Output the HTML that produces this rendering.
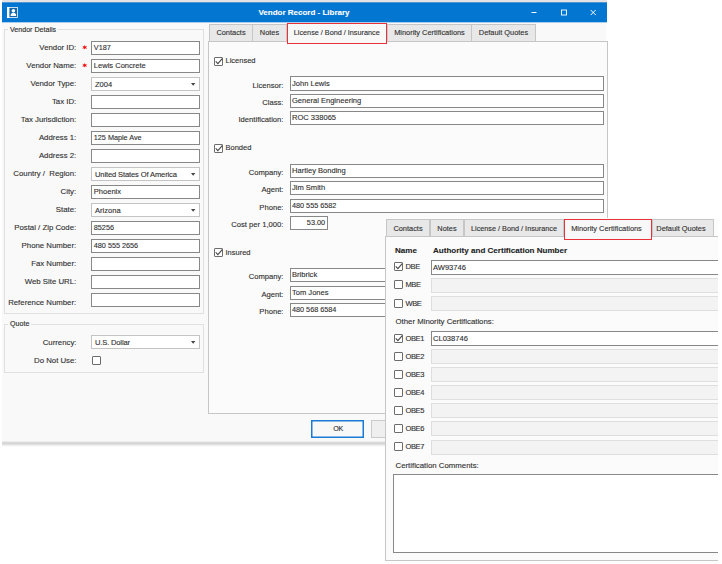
<!DOCTYPE html>
<html><head><meta charset="utf-8"><title>Vendor Record - Library</title>
<style>
html,body{margin:0;padding:0;background:#fff}
body{width:722px;height:564px;position:relative;overflow:hidden;font-family:"Liberation Sans",sans-serif;font-size:7.5px;color:#303030;-webkit-text-stroke:0.12px #303030}
div,svg{position:absolute;box-sizing:border-box}
.abs{position:absolute}
.win{background:#f9f9f9}
.t{white-space:nowrap;line-height:10px;height:10px}
.r{text-align:right}
.b{font-weight:bold;color:#222;font-size:8.05px}
.tt{color:#fff;font-weight:bold;font-size:8px;-webkit-text-stroke:0.1px #fff}
.leg{background:#f9f9f9;padding:0 2px;font-size:7.1px;-webkit-text-stroke:0.14px #303030}
.lb{font-size:7.8px}
.cl{font-size:7.5px}
.rl{font-size:7.65px}
.fld.num{font-size:7.25px}
.grp{border:1px solid #e0e0e0}
.fld{font-size:7.55px;background:#fff;border:1px solid #888;line-height:11px;padding-left:1px;white-space:nowrap;overflow:hidden}
.fld.hi{line-height:11px}
.fld.ov{line-height:12px}
.fld.lp{padding-left:1.8px}
.fld.cmb{border-color:#c4c4c4;line-height:12px}
.fld.dis{background:#f3f3f3;border-color:#dedede}
.fld div,.fld span,.tab span{position:static;display:block}
.arw{right:3.4px;top:5px}
.cb{width:9px;height:9px;background:#fff;border:1px solid #6c6c6c;border-radius:1px}
.cb svg{left:-1px;top:-1px}
.page{background:#fbfbfb;border:1px solid #c6c6c6}
.tab{font-size:7.4px;background:#e8e8e8;border:1px solid #c6c6c6;border-bottom:none;text-align:center;line-height:17px;white-space:nowrap}
.tab.sel{background:#f8f8f8;border:1px solid #ea3038;line-height:19.5px}
.btn{background:#efefef;border:1px solid #cacaca;text-align:center;line-height:16px;font-size:7.2px;letter-spacing:-.4px;padding-left:1px}
.btn.ok{background:#f8f8f8;border:1px solid #1a7ad4;box-shadow:inset 0 0 0 .5px #1a7ad4}
</style></head>
<body>
<div class="abs" style="left:2px;top:0;width:605px;height:2px;background:#e4e2e2"></div>
<div class="abs win" style="left:2px;top:2px;width:604px;height:440px"></div><div class="abs" style="left:2px;top:441px;width:605px;height:6px;background:linear-gradient(#f5f5f5 0%,#dcdcdc 22%,#d3d3d3 40%,#e0e0e0 58%,#f2f2f2 78%,#fff 100%)"></div>
<div class="abs" style="left:2px;top:2px;width:605px;height:21px;background:linear-gradient(to bottom,#4f98d8 0,#4f98d8 1px,#0071cc 1px,#0276d0 2.5px,#0276d0 20px,#a9cdec 20px,#a9cdec 21px)"></div>
<svg class="abs" style="left:7px;top:7px" width="11" height="11" viewBox="0 0 11 11"><rect x="0.5" y="0.5" width="10" height="10" fill="#1467ac" stroke="#eaf2fa" stroke-width="0.85"/><rect x="0" y="0" width="2.4" height="11" fill="#fff"/><circle cx="6.4" cy="3.7" r="1.8" fill="#fff"/><path d="M3.6 9 C3.6 6.4 4.8 5.8 6.4 5.8 C8 5.8 9.2 6.4 9.2 9 Z" fill="#fff"/></svg>
<div class="t tt" style="left:204px;top:8px;width:200px;text-align:center">Vendor Record - Library</div>
<svg class="abs" style="left:525px;top:6px" width="80" height="13" viewBox="0 0 80 13"><path d="M6.5 6.5 H11.5" stroke="#fff" stroke-width="1"/><rect x="36.5" y="4" width="5" height="5" fill="none" stroke="#fff" stroke-width="0.9"/><path d="M65.7 4 L70.7 9 M70.7 4 L65.7 9" stroke="#fff" stroke-width="0.95"/></svg>
<div class="grp" style="left:4px;top:29px;width:200px;height:285px"></div>
<div class="t leg" style="left:8px;top:24.5px;">Vendor Details</div>
<div class="grp" style="left:4px;top:324px;width:200px;height:49px"></div>
<div class="t leg" style="left:8px;top:319px;">Quote</div>
<div class="t r lb" style="left:-73.8px;width:150px;top:42.5px;">Vendor ID:</div>
<div class="fld lp num" style="left:91px;top:41px;width:109px;height:14px">V187</div>
<svg class="abs" style="left:81.5px;top:45.4px" viewBox="0 0 10 10" width="5.4" height="4.6" preserveAspectRatio="none"><path d="M5 0 L6.2 3 L9.5 1.8 L7.3 5 L9.5 8.2 L6.2 7 L5 10 L3.8 7 L0.5 8.2 L2.7 5 L0.5 1.8 L3.8 3 Z" fill="#f01010"/></svg>
<div class="t r lb" style="left:-73.8px;width:150px;top:60.5px;">Vendor Name:</div>
<div class="fld lp" style="left:91px;top:59px;width:109px;height:14px">Lewis Concrete</div>
<svg class="abs" style="left:81.5px;top:63.4px" viewBox="0 0 10 10" width="5.4" height="4.6" preserveAspectRatio="none"><path d="M5 0 L6.2 3 L9.5 1.8 L7.3 5 L9.5 8.2 L6.2 7 L5 10 L3.8 7 L0.5 8.2 L2.7 5 L0.5 1.8 L3.8 3 Z" fill="#f01010"/></svg>
<div class="t r lb" style="left:-73.8px;width:150px;top:78.5px;">Vendor Type:</div>
<div class="fld cmb" style="left:91px;top:77px;width:109px;height:14px"><span style="padding:.8px 0 0 2px">Z004</span><svg class="arw" viewBox="0 0 5 3" width="4.4" height="2.8"><path d="M0 0 H5 L2.5 3 Z" fill="#444"/></svg></div>
<div class="t r lb" style="left:-73.8px;width:150px;top:96.5px;">Tax ID:</div>
<div class="fld lp" style="left:91px;top:95px;width:109px;height:14px"></div>
<div class="t r lb" style="left:-73.8px;width:150px;top:114.5px;">Tax Jurisdiction:</div>
<div class="fld lp" style="left:91px;top:113px;width:109px;height:14px"></div>
<div class="t r lb" style="left:-73.8px;width:150px;top:132.5px;">Address 1:</div>
<div class="fld lp num" style="left:91px;top:131px;width:109px;height:14px">125 Maple Ave</div>
<div class="t r lb" style="left:-73.8px;width:150px;top:150.5px;">Address 2:</div>
<div class="fld lp" style="left:91px;top:149px;width:109px;height:14px"></div>
<div class="t r lb" style="left:-73.8px;width:150px;top:168.5px;">Country /&nbsp; Region:</div>
<div class="fld cmb" style="left:91px;top:167px;width:109px;height:14px"><span style="padding:.8px 0 0 2px"><span style="letter-spacing:-.12px">United States Of America</span></span><svg class="arw" viewBox="0 0 5 3" width="4.4" height="2.8"><path d="M0 0 H5 L2.5 3 Z" fill="#444"/></svg></div>
<div class="t r lb" style="left:-73.8px;width:150px;top:186.5px;">City:</div>
<div class="fld lp" style="left:91px;top:185px;width:109px;height:14px">Phoenix</div>
<div class="t r lb" style="left:-73.8px;width:150px;top:204.5px;">State:</div>
<div class="fld cmb" style="left:91px;top:203px;width:109px;height:14px"><span style="padding:.8px 0 0 2px">Arizona</span><svg class="arw" viewBox="0 0 5 3" width="4.4" height="2.8"><path d="M0 0 H5 L2.5 3 Z" fill="#444"/></svg></div>
<div class="t r lb" style="left:-73.8px;width:150px;top:222.5px;">Postal / Zip Code:</div>
<div class="fld lp num" style="left:91px;top:221px;width:109px;height:14px">85256</div>
<div class="t r lb" style="left:-73.8px;width:150px;top:240.5px;">Phone Number:</div>
<div class="fld lp num" style="left:91px;top:239px;width:109px;height:14px">480 555 2656</div>
<div class="t r lb" style="left:-73.8px;width:150px;top:258.5px;">Fax Number:</div>
<div class="fld lp" style="left:91px;top:257px;width:109px;height:14px"></div>
<div class="t r lb" style="left:-73.8px;width:150px;top:276.5px;">Web Site URL:</div>
<div class="fld lp" style="left:91px;top:275px;width:109px;height:14px"></div>
<div class="t r lb" style="left:-73.8px;width:150px;top:297.5px;">Reference Number:</div>
<div class="fld lp" style="left:91px;top:293px;width:109px;height:14px"></div>
<div class="t r lb" style="left:-73.5px;width:150px;top:337.5px;">Currency:</div>
<div class="fld cmb" style="left:91px;top:335px;width:109px;height:14px"><span style="padding:.8px 0 0 2px;letter-spacing:-.15px">U.S. Dollar</span><svg class="arw" viewBox="0 0 5 3" width="4.4" height="2.8"><path d="M0 0 H5 L2.5 3 Z" fill="#444"/></svg></div>
<div class="t r lb" style="left:-73.5px;width:150px;top:356px;">Do Not Use:</div>
<div class="cb" style="left:91.5px;top:356px"></div>
<div class="page" style="left:208px;top:41px;width:400px;height:373px"></div>
<div class="tab" style="left:209px;top:24px;width:44px;height:17px"><span style="line-height:16px">Contacts</span></div>
<div class="tab" style="left:252px;top:24px;width:35px;height:17px"><span style="line-height:16px">Notes</span></div>
<div class="tab" style="left:387px;top:24px;width:85px;height:17px"><span style="line-height:16px">Minority Certifications</span></div>
<div class="tab" style="left:471px;top:24px;width:65px;height:17px"><span style="line-height:16px">Default Quotes</span></div>
<div class="tab sel" style="left:286.5px;top:23px;width:100.5px;height:20.5px"><span style="line-height:18.5px"><span style="font-size:7.25px">License / Bond / Insurance</span></span></div>
<div class="cb" style="left:214px;top:57px"><svg viewBox="0 0 9 9" width="9" height="9"><path d="M1.7 4.3 L3.9 6.6 L8.2 1.6" fill="none" stroke="#454545" stroke-width="1.05"/></svg></div>
<div class="t cl" style="left:225.5px;top:55.5px;">Licensed</div>
<div class="t rl r lb" style="left:133.5px;width:150px;top:80.5px;">Licensor:</div>
<div class="fld hi" style="left:290px;top:76px;width:314px;height:15px"><div style="padding-top:1px">John Lewis</div></div>
<div class="t rl r lb" style="left:133.5px;width:150px;top:97.5px;">Class:</div>
<div class="fld hi" style="left:290px;top:94px;width:314px;height:14px">General Engineering</div>
<div class="t rl r lb" style="left:133.5px;width:150px;top:114.5px;">Identification:</div>
<div class="fld hi" style="left:290px;top:111px;width:314px;height:14px">ROC 338065</div>
<div class="cb" style="left:214px;top:144px"><svg viewBox="0 0 9 9" width="9" height="9"><path d="M1.7 4.3 L3.9 6.6 L8.2 1.6" fill="none" stroke="#454545" stroke-width="1.05"/></svg></div>
<div class="t cl" style="left:225.5px;top:143px;">Bonded</div>
<div class="t rl r lb" style="left:133.5px;width:150px;top:167.5px;">Company:</div>
<div class="fld hi" style="left:290px;top:164px;width:314px;height:14px">Hartley Bonding</div>
<div class="t rl r lb" style="left:133.5px;width:150px;top:184.5px;">Agent:</div>
<div class="fld hi" style="left:290px;top:181px;width:314px;height:14px">Jim Smith</div>
<div class="t rl r lb" style="left:133.5px;width:150px;top:202.5px;">Phone:</div>
<div class="fld hi num" style="left:290px;top:199px;width:314px;height:14px">480 555 6582</div>
<div class="t rl r lb" style="left:133.5px;width:150px;top:219.5px;">Cost per 1,000:</div>
<div class="fld num" style="left:290px;top:216px;width:38px;height:14px"><div style="text-align:right;padding-right:2px">53.00</div></div>
<div class="cb" style="left:214px;top:248px"><svg viewBox="0 0 9 9" width="9" height="9"><path d="M1.7 4.3 L3.9 6.6 L8.2 1.6" fill="none" stroke="#454545" stroke-width="1.05"/></svg></div>
<div class="t cl" style="left:225.5px;top:248px;">Insured</div>
<div class="t rl r lb" style="left:133.5px;width:150px;top:271.5px;">Company:</div>
<div class="fld hi" style="left:290px;top:268px;width:314px;height:14px">Bribrick</div>
<div class="t rl r lb" style="left:133.5px;width:150px;top:289.5px;">Agent:</div>
<div class="fld hi" style="left:290px;top:286px;width:314px;height:14px">Tom Jones</div>
<div class="t rl r lb" style="left:133.5px;width:150px;top:306.5px;">Phone:</div>
<div class="fld hi num" style="left:290px;top:303px;width:314px;height:14px">480 568 6584</div>
<div class="btn ok" style="left:311px;top:420px;width:53px;height:18px">OK</div>
<div class="btn" style="left:371px;top:420px;width:53px;height:18px"></div>
<div class="abs" style="left:385px;top:218px;width:333px;height:346px;background:#fcfcfc"></div>
<div class="page" style="left:385px;top:236px;width:340px;height:325px"></div>
<div class="tab" style="left:386px;top:219px;width:44px;height:17px"><span style="line-height:17px">Contacts</span></div>
<div class="tab" style="left:430px;top:219px;width:34px;height:17px"><span style="line-height:17px">Notes</span></div>
<div class="tab" style="left:464px;top:219px;width:100px;height:17px"><span style="line-height:17px"><span style="font-size:7.28px">License / Bond / Insurance</span></span></div>
<div class="tab" style="left:652px;top:219px;width:62px;height:17px"><span style="line-height:17px"><span style="padding-right:4px">Default Quotes</span></span></div>
<div class="tab sel" style="left:564px;top:219px;width:88px;height:20.5px"><span style="line-height:17.5px"><span style="padding-right:3px">Minority Certifications</span></span></div>
<div class="abs" style="left:718px;top:210px;width:4px;height:354px;background:#fff"></div>
<div class="t b" style="left:395px;top:245.5px;">Name</div>
<div class="t b" style="left:433px;top:245.5px;">Authority and Certification Number</div>
<div class="cb" style="left:393.5px;top:262px"><svg viewBox="0 0 9 9" width="9" height="9"><path d="M1.7 4.3 L3.9 6.6 L8.2 1.6" fill="none" stroke="#454545" stroke-width="1.05"/></svg></div>
<div class="t cl" style="left:405.5px;top:261.5px;letter-spacing:-.38px">DBE</div>
<div class="fld ov" style="left:431px;top:260px;width:290px;height:15px"><div style="padding-top:.8px">AW93746</div></div>
<div class="cb" style="left:393.5px;top:280px"></div>
<div class="t cl" style="left:405.5px;top:279.5px;letter-spacing:-.38px">MBE</div>
<div class="fld dis" style="left:431px;top:278px;width:290px;height:15px"></div>
<div class="cb" style="left:393.5px;top:299px"></div>
<div class="t cl" style="left:405.5px;top:298.5px;letter-spacing:-.38px">WBE</div>
<div class="fld dis" style="left:431px;top:296px;width:290px;height:15px"></div>
<div class="t lb" style="left:395.5px;top:316.5px;">Other Minority Certifications:</div>
<div class="cb" style="left:393.5px;top:334px"><svg viewBox="0 0 9 9" width="9" height="9"><path d="M1.7 4.3 L3.9 6.6 L8.2 1.6" fill="none" stroke="#454545" stroke-width="1.05"/></svg></div>
<div class="t cl" style="left:405.5px;top:333.5px;letter-spacing:-.38px">OBE1</div>
<div class="fld ov" style="left:431px;top:331px;width:290px;height:15px"><div style="padding-top:.8px">CL038746</div></div>
<div class="cb" style="left:393.5px;top:352px"></div>
<div class="t cl" style="left:405.5px;top:351.5px;letter-spacing:-.38px">OBE2</div>
<div class="fld dis" style="left:431px;top:349px;width:290px;height:15px"></div>
<div class="cb" style="left:393.5px;top:370px"></div>
<div class="t cl" style="left:405.5px;top:369.5px;letter-spacing:-.38px">OBE3</div>
<div class="fld dis" style="left:431px;top:367px;width:290px;height:15px"></div>
<div class="cb" style="left:393.5px;top:388px"></div>
<div class="t cl" style="left:405.5px;top:387.5px;letter-spacing:-.38px">OBE4</div>
<div class="fld dis" style="left:431px;top:385px;width:290px;height:15px"></div>
<div class="cb" style="left:393.5px;top:406px"></div>
<div class="t cl" style="left:405.5px;top:405.5px;letter-spacing:-.38px">OBE5</div>
<div class="fld dis" style="left:431px;top:403px;width:290px;height:15px"></div>
<div class="cb" style="left:393.5px;top:424px"></div>
<div class="t cl" style="left:405.5px;top:423.5px;letter-spacing:-.38px">OBE6</div>
<div class="fld dis" style="left:431px;top:421px;width:290px;height:15px"></div>
<div class="cb" style="left:393.5px;top:442px"></div>
<div class="t cl" style="left:405.5px;top:441.5px;letter-spacing:-.38px">OBE7</div>
<div class="fld dis" style="left:431px;top:440px;width:290px;height:15px"></div>
<div class="t lb" style="left:395.5px;top:460.5px;">Certification Comments:</div>
<div class="fld" style="left:393px;top:474px;width:330px;height:79px"></div>
<div class="abs" style="left:718px;top:210px;width:4px;height:354px;background:#fff"></div>
</body></html>
